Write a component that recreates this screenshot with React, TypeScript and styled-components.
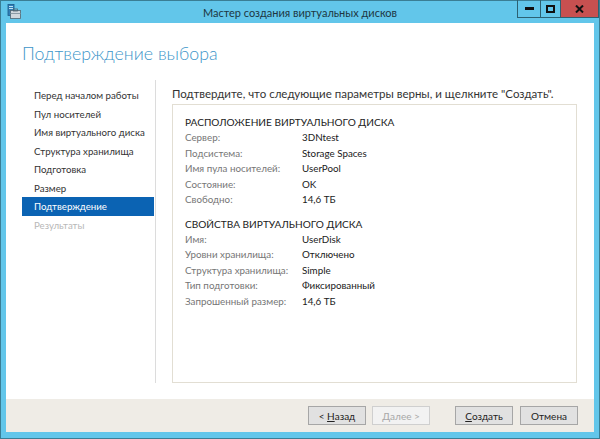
import React from "react";
import styled, { createGlobalStyle } from "styled-components";

const Global = createGlobalStyle`
  html, body { margin: 0; padding: 0; width: 600px; height: 439px; overflow: hidden; background: #62c6ea; }
  * { box-sizing: border-box; }
`;

const FONT = `Lato, "Open Sans", "DejaVu Sans", sans-serif`;

const Window = styled.div`
  width: 600px;
  height: 439px;
  border: 1px solid #3a7e95;
  background: #62c6ea;
  display: flex;
  flex-direction: column;
  font-family: ${FONT};
`;

const TitleBar = styled.div`
  height: 22px;
  position: relative;
  display: flex;
  align-items: center;
  justify-content: center;
  color: #1d3642;
  font-size: 11px;
  padding-top: 1px;
`;

const TitleIcon = styled.svg`
  position: absolute;
  left: 5px;
  top: 3px;
`;

const Controls = styled.div`
  position: absolute;
  right: 0;
  top: -1px;
  display: flex;
  height: 18px;
  border: 1px solid #2c6172;
  border-top: none;
`;

const Ctrl = styled.div<{ $w: number; $close?: boolean }>`
  width: ${(p) => p.$w}px;
  height: 100%;
  display: flex;
  align-items: center;
  justify-content: center;
  background: ${(p) => (p.$close ? "#c75050" : "transparent")};
  & + & { border-left: 1px solid #2c6172; }
`;

const Client = styled.div`
  flex: 1;
  margin: 0 5px 6px 5px;
  background: #fff;
  display: flex;
  flex-direction: column;
`;

const Header = styled.div`
  height: 57px;
  padding: 18px 0 0 16px;
`;

const PageTitle = styled.div`
  font-weight: 300;
  font-size: 17.8px;
  line-height: 24px;
  color: #3d95c9;
`;

const Body = styled.div`
  flex: 1;
  display: flex;
  padding-bottom: 16px;
`;

const Nav = styled.div`
  width: 150px;
  border-right: 1px solid #dcdcdc;
  padding: 6px 0 0 16px;
  display: flex;
  flex-direction: column;
`;

const NavItem = styled.div<{ $active?: boolean; $disabled?: boolean }>`
  width: 132px;
  height: 18.5px;
  line-height: 18.5px;
  padding-left: 12px;
  font-size: 9.7px;
  white-space: nowrap;
  color: ${(p) => (p.$active ? "#fff" : p.$disabled ? "#b8b8b8" : "#333")};
  background: ${(p) => (p.$active ? "#0b63b3" : "transparent")};
`;

const Main = styled.div`
  flex: 1;
  display: flex;
  flex-direction: column;
  padding: 5px 17px 0 16px;
`;

const Intro = styled.div`
  height: 19px;
  line-height: 18px;
  font-size: 11.5px;
  color: #333;
  white-space: nowrap;
`;

const Box = styled.div`
  flex: 1;
  border: 1px solid #e2ded3;
  padding: 9px 0 0 12px;
`;

const Section = styled.div`
  & + & { margin-top: 8px; }
`;

const SectionTitle = styled.div`
  height: 16px;
  line-height: 16px;
  font-size: 10.1px;
  color: #222;
`;

const Row = styled.div`
  display: flex;
  height: 15.5px;
  line-height: 15.5px;
  font-size: 9.8px;
`;

const Label = styled.div`
  width: 117px;
  color: #767676;
  white-space: nowrap;
`;

const Value = styled.div`
  color: #1a1a1a;
  white-space: nowrap;
`;

const Footer = styled.div`
  height: 33px;
  background: #efece6;
  display: flex;
  align-items: center;
  justify-content: flex-end;
  padding-right: 16px;
`;

const Button = styled.div<{ $disabled?: boolean; $gap?: number }>`
  width: 58px;
  height: 19px;
  margin-left: ${(p) => p.$gap ?? 6}px;
  display: flex;
  align-items: center;
  justify-content: center;
  font-size: 10px;
  color: ${(p) => (p.$disabled ? "#a8a8a8" : "#222")};
  background: ${(p) => (p.$disabled ? "#f2f2f2" : "#e1e1e1")};
  border: 1px solid ${(p) => (p.$disabled ? "#cfcfcf" : "#a6a6a6")};
  u { text-decoration: underline; }
`;

const nav = [
  "Перед началом работы",
  "Пул носителей",
  "Имя виртуального диска",
  "Структура хранилища",
  "Подготовка",
  "Размер",
  "Подтверждение",
  "Результаты",
];

const loc: [string, string][] = [
  ["Сервер:", "3DNtest"],
  ["Подсистема:", "Storage Spaces"],
  ["Имя пула носителей:", "UserPool"],
  ["Состояние:", "OK"],
  ["Свободно:", "14,6 ТБ"],
];

const props: [string, string][] = [
  ["Имя:", "UserDisk"],
  ["Уровни хранилища:", "Отключено"],
  ["Структура хранилища:", "Simple"],
  ["Тип подготовки:", "Фиксированный"],
  ["Запрошенный размер:", "14,6 ТБ"],
];

export default function App() {
  return (
    <>
      <Global />
      <Window>
        <TitleBar>
          <TitleIcon width="15" height="15" viewBox="0 0 15 15">
            <rect x="2" y="0.5" width="6" height="11" fill="#2f7fb8" stroke="#1d5b8a" strokeWidth="0.8" />
            <rect x="3" y="2" width="4" height="1" fill="#bfe3f5" />
            <rect x="3" y="4" width="4" height="1" fill="#bfe3f5" />
            <rect x="4.5" y="6.5" width="10" height="8" fill="#cfd7dc" stroke="#4f6470" strokeWidth="0.8" />
            <rect x="7.5" y="5" width="4" height="2" fill="none" stroke="#4f6470" strokeWidth="0.8" />
            <rect x="4.5" y="9" width="10" height="1" fill="#8a9aa4" />
          </TitleIcon>
          Мастер создания виртуальных дисков
          <Controls>
            <Ctrl $w={22}>
              <svg width="9" height="3"><rect width="9" height="3" fill="#111" /></svg>
            </Ctrl>
            <Ctrl $w={20}>
              <svg width="9" height="8"><rect x="1" y="1" width="7" height="6" fill="none" stroke="#111" strokeWidth="2" /></svg>
            </Ctrl>
            <Ctrl $w={38} $close>
              <svg width="9" height="8" viewBox="0 0 9 8">
                <path d="M1 0.5 L8 7.5 M8 0.5 L1 7.5" stroke="#111" strokeWidth="2" />
              </svg>
            </Ctrl>
          </Controls>
        </TitleBar>
        <Client>
          <Header>
            <PageTitle>Подтверждение выбора</PageTitle>
          </Header>
          <Body>
            <Nav>
              {nav.map((n, i) => (
                <NavItem key={n} $active={i === 6} $disabled={i === 7}>
                  {n}
                </NavItem>
              ))}
            </Nav>
            <Main>
              <Intro>Подтвердите, что следующие параметры верны, и щелкните "Создать".</Intro>
              <Box>
                <Section>
                  <SectionTitle>РАСПОЛОЖЕНИЕ ВИРТУАЛЬНОГО ДИСКА</SectionTitle>
                  {loc.map(([l, v]) => (
                    <Row key={l}>
                      <Label>{l}</Label>
                      <Value>{v}</Value>
                    </Row>
                  ))}
                </Section>
                <Section>
                  <SectionTitle>СВОЙСТВА ВИРТУАЛЬНОГО ДИСКА</SectionTitle>
                  {props.map(([l, v]) => (
                    <Row key={l}>
                      <Label>{l}</Label>
                      <Value>{v}</Value>
                    </Row>
                  ))}
                </Section>
              </Box>
            </Main>
          </Body>
          <Footer>
            <Button $gap={0}>&lt;&nbsp;<u>Н</u>азад</Button>
            <Button $disabled><u>Д</u>алее &gt;</Button>
            <Button $gap={25}><u>С</u>оздать</Button>
            <Button $gap={7}>Отмена</Button>
          </Footer>
        </Client>
      </Window>
    </>
  );
}
